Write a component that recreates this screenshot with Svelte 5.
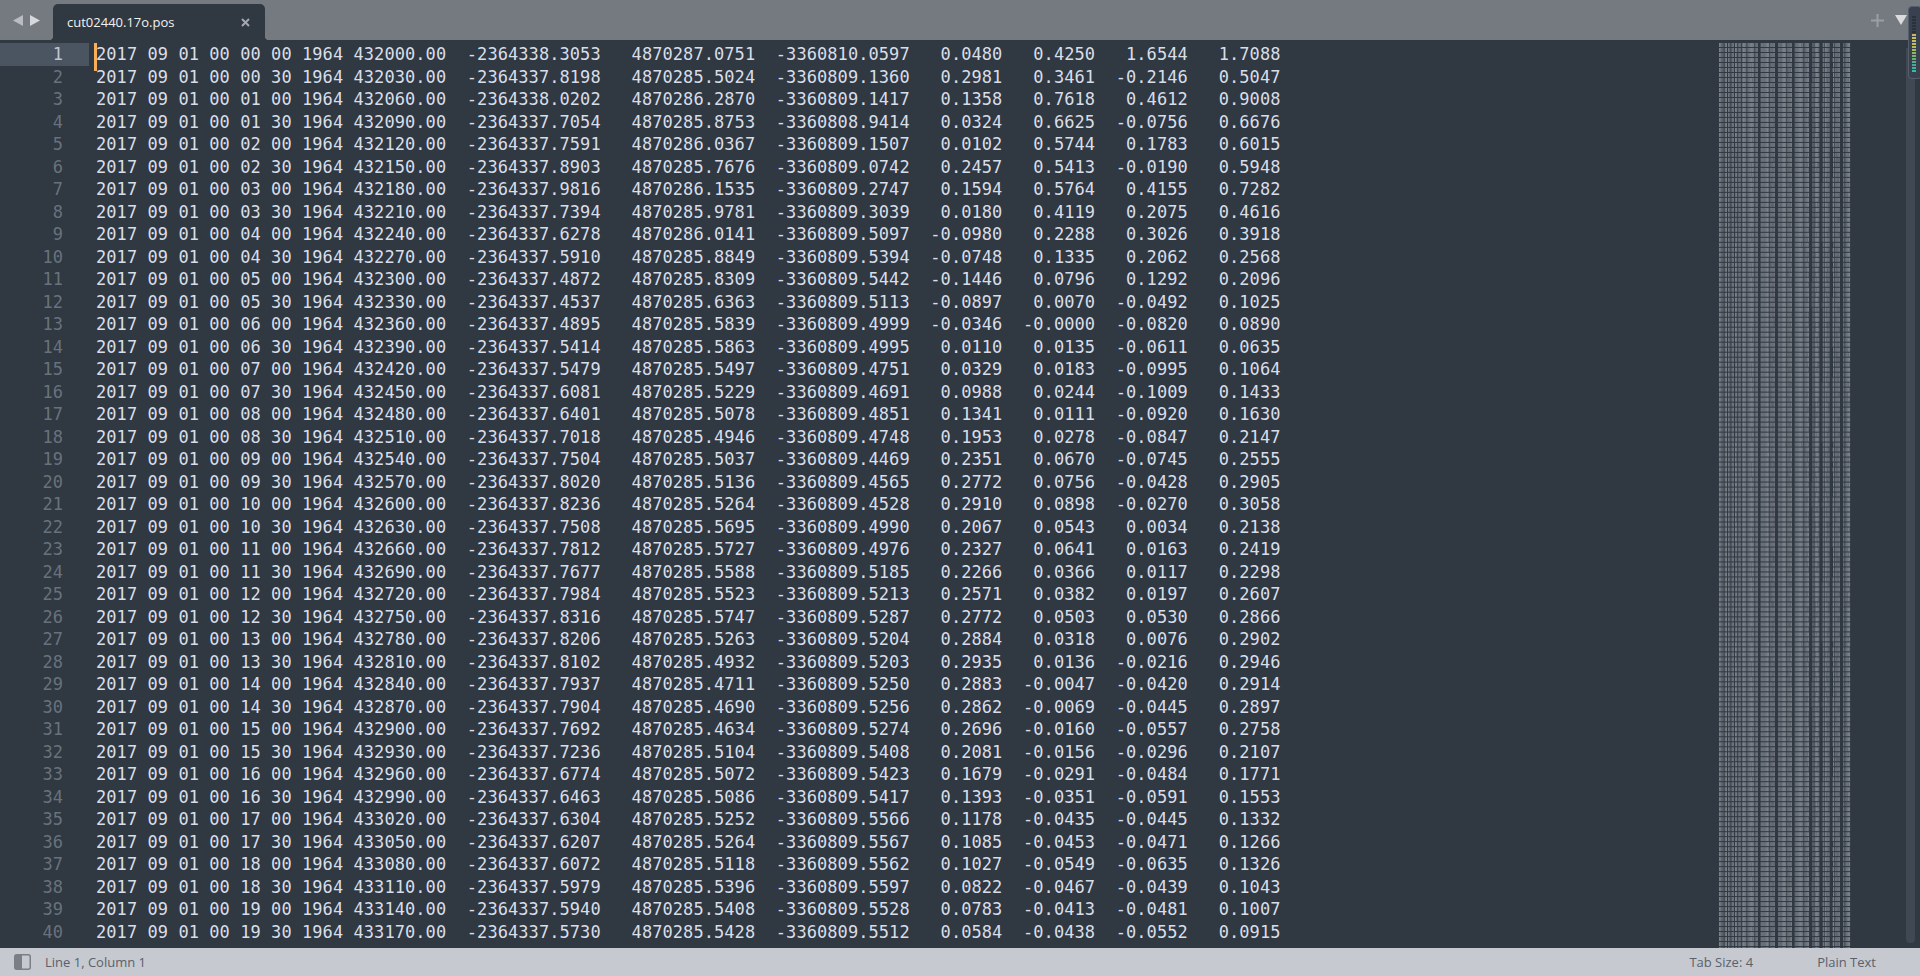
<script>
    import { onMount } from "svelte";

    const raw = `-2364338.3053 4870287.0751 -3360810.0597 0.0480 0.4250 1.6544 1.7088
-2364337.8198 4870285.5024 -3360809.1360 0.2981 0.3461 -0.2146 0.5047
-2364338.0202 4870286.2870 -3360809.1417 0.1358 0.7618 0.4612 0.9008
-2364337.7054 4870285.8753 -3360808.9414 0.0324 0.6625 -0.0756 0.6676
-2364337.7591 4870286.0367 -3360809.1507 0.0102 0.5744 0.1783 0.6015
-2364337.8903 4870285.7676 -3360809.0742 0.2457 0.5413 -0.0190 0.5948
-2364337.9816 4870286.1535 -3360809.2747 0.1594 0.5764 0.4155 0.7282
-2364337.7394 4870285.9781 -3360809.3039 0.0180 0.4119 0.2075 0.4616
-2364337.6278 4870286.0141 -3360809.5097 -0.0980 0.2288 0.3026 0.3918
-2364337.5910 4870285.8849 -3360809.5394 -0.0748 0.1335 0.2062 0.2568
-2364337.4872 4870285.8309 -3360809.5442 -0.1446 0.0796 0.1292 0.2096
-2364337.4537 4870285.6363 -3360809.5113 -0.0897 0.0070 -0.0492 0.1025
-2364337.4895 4870285.5839 -3360809.4999 -0.0346 -0.0000 -0.0820 0.0890
-2364337.5414 4870285.5863 -3360809.4995 0.0110 0.0135 -0.0611 0.0635
-2364337.5479 4870285.5497 -3360809.4751 0.0329 0.0183 -0.0995 0.1064
-2364337.6081 4870285.5229 -3360809.4691 0.0988 0.0244 -0.1009 0.1433
-2364337.6401 4870285.5078 -3360809.4851 0.1341 0.0111 -0.0920 0.1630
-2364337.7018 4870285.4946 -3360809.4748 0.1953 0.0278 -0.0847 0.2147
-2364337.7504 4870285.5037 -3360809.4469 0.2351 0.0670 -0.0745 0.2555
-2364337.8020 4870285.5136 -3360809.4565 0.2772 0.0756 -0.0428 0.2905
-2364337.8236 4870285.5264 -3360809.4528 0.2910 0.0898 -0.0270 0.3058
-2364337.7508 4870285.5695 -3360809.4990 0.2067 0.0543 0.0034 0.2138
-2364337.7812 4870285.5727 -3360809.4976 0.2327 0.0641 0.0163 0.2419
-2364337.7677 4870285.5588 -3360809.5185 0.2266 0.0366 0.0117 0.2298
-2364337.7984 4870285.5523 -3360809.5213 0.2571 0.0382 0.0197 0.2607
-2364337.8316 4870285.5747 -3360809.5287 0.2772 0.0503 0.0530 0.2866
-2364337.8206 4870285.5263 -3360809.5204 0.2884 0.0318 0.0076 0.2902
-2364337.8102 4870285.4932 -3360809.5203 0.2935 0.0136 -0.0216 0.2946
-2364337.7937 4870285.4711 -3360809.5250 0.2883 -0.0047 -0.0420 0.2914
-2364337.7904 4870285.4690 -3360809.5256 0.2862 -0.0069 -0.0445 0.2897
-2364337.7692 4870285.4634 -3360809.5274 0.2696 -0.0160 -0.0557 0.2758
-2364337.7236 4870285.5104 -3360809.5408 0.2081 -0.0156 -0.0296 0.2107
-2364337.6774 4870285.5072 -3360809.5423 0.1679 -0.0291 -0.0484 0.1771
-2364337.6463 4870285.5086 -3360809.5417 0.1393 -0.0351 -0.0591 0.1553
-2364337.6304 4870285.5252 -3360809.5566 0.1178 -0.0435 -0.0445 0.1332
-2364337.6207 4870285.5264 -3360809.5567 0.1085 -0.0453 -0.0471 0.1266
-2364337.6072 4870285.5118 -3360809.5562 0.1027 -0.0549 -0.0635 0.1326
-2364337.5979 4870285.5396 -3360809.5597 0.0822 -0.0467 -0.0439 0.1043
-2364337.5940 4870285.5408 -3360809.5528 0.0783 -0.0413 -0.0481 0.1007
-2364337.5730 4870285.5428 -3360809.5512 0.0584 -0.0438 -0.0552 0.0915`.split("\n");

    const pad2 = (n) => String(n).padStart(2, "0");

    const rows = raw.map((line, i) => {
        const v = line.split(" ");
        const mm = pad2(Math.floor(i / 2));
        const ss = i % 2 ? "30" : "00";
        return (
            `2017 09 01 00 ${mm} ${ss} 1964 ${432000 + i * 30}.00` +
            v[0].padStart(15) + v[1].padStart(15) + v[2].padStart(15) +
            v[3].padStart(9) + v[4].padStart(9) + v[5].padStart(9) + v[6].padStart(9)
        );
    });

    // level meter on the scrollbar knob, top to bottom
    const meter = [
        "#2b313c", "#2b313c", "#2b313c", "#2b313c", "#2b313c", "#2b313c",
        "#c9b85c", "#c9bc5e", "#c4be5c", "#bcbf5c", "#aebd5c", "#a0ba5e", "#8fb664",
        "#7cb26c", "#68ae78", "#55ab86", "#47aa94", "#3fb0a0", "#3ab8a8",
    ];

    let map;

    onMount(() => {
        const ctx = map.getContext("2d");
        for (let l = 0; l < 182; l++) {
            const row = rows[l % rows.length];
            for (let c = 0; c < row.length; c++) {
                const ch = row[c];
                if (ch === " ") continue;
                // thin glyphs read dimmer once shrunk
                ctx.fillStyle = ch === "." || ch === "-" ? "#4a515b" : ch === "1" || ch === "7" ? "#6a7079" : "#7a8089";
                ctx.fillRect(c * 1.14, l * 5, 1.14, 4);
            }
        }
    });
</script>

<div class="window">
    <header class="tabs">
        <nav class="arrows">
            <svg width="10" height="11" viewBox="0 0 10 11"><path d="M10 0v11L0 5.5z" fill="#b9bcc1" /></svg>
            <svg width="10" height="11" viewBox="0 0 10 11"><path d="M0 0v11l10-5.500z" fill="#d6d8db" /></svg>
        </nav>
        <div class="tab">
            <span>cut02440.17o.pos</span>
            <svg width="9" height="9" viewBox="0 0 9 9"><path d="M1 1l7 7M8 1L1 8" stroke="#a4a8ae" stroke-width="2" /></svg>
        </div>
        <div class="tab-actions">
            <svg width="13" height="13" viewBox="0 0 13 13"><path d="M6.500 0v13M0 6.500h13" stroke="#9a9ea5" stroke-width="2" /></svg>
            <svg width="12" height="10" viewBox="0 0 12 10"><path d="M0 0h12L6 10z" fill="#d9dbde" /></svg>
        </div>
    </header>

    <main class="editor">
        <div class="lines">
            {#each rows as row, i}
                <div class="line" class:current={i === 0}>
                    <span class="num">{i + 1}</span><span class="text">{row}</span>
                </div>
            {/each}
            <i class="caret"></i>
        </div>
        <canvas bind:this={map} width="140" height="906"></canvas>
        <div class="scrollbar"></div>
        <div class="knob">
            {#each meter as color}
                <b style="background: {color}"></b>
            {/each}
        </div>
    </main>

    <footer class="status">
        <svg width="17" height="16" viewBox="0 0 17 16">
            <rect x="0.750" y="0.750" width="15.500" height="14.500" rx="2" fill="none" stroke="#7b7e84" stroke-width="1.500" />
            <rect x="1" y="1" width="7" height="14" fill="#7b7e84" />
        </svg>
        <span class="pos">Line 1, Column 1</span>
        <span class="tabsize">Tab Size: 4</span>
        <span class="syntax">Plain Text</span>
    </footer>
</div>

<style>
    :global(body) {
        background: #303841;
    }

    .window {
        height: 976px;
        display: flex;
        flex-direction: column;
        overflow: hidden;
    }

    /* ---- Tab strip ---- */
    .tabs {
        height: 40px;
        flex: none;
        background: #757980;
        display: flex;
        align-items: flex-end;
    }

    .arrows {
        width: 53px;
        height: 40px;
        box-sizing: border-box;
        display: flex;
        gap: 7px;
        padding: 15px 0 0 13px;
    }

    .arrows svg {
        display: block;
    }

    .tab {
        position: relative;
        width: 212px;
        height: 36px;
        box-sizing: border-box;
        padding: 0 15px 0 14px;
        background: #303841;
        color: #f0f1f2;
        font: 13px/36px "Open Sans", sans-serif;
        border-radius: 5px 5px 0 0;
        display: flex;
        align-items: center;
        justify-content: space-between;
    }

    .tab::before,
    .tab::after {
        content: "";
        position: absolute;
        bottom: 0;
        width: 4px;
        height: 4px;
    }

    .tab::before {
        left: -4px;
        background: radial-gradient(circle at 0 0, transparent 4px, #303841 4.500px);
    }

    .tab::after {
        right: -4px;
        background: radial-gradient(circle at 100% 0, transparent 4px, #303841 4.500px);
    }

    .tab-actions {
        margin-left: auto;
        height: 40px;
        box-sizing: border-box;
        padding: 14px 13px 0 0;
        display: flex;
        gap: 11px;
    }

    .tab-actions svg:last-child {
        margin-top: 1px;
    }

    /* ---- Editor ---- */
    .editor {
        flex: 1;
        position: relative;
        display: flex;
        padding-top: 3px;
        min-height: 0;
    }

    .lines {
        position: relative;
        width: 1719px;
        flex: none;
    }

    .line {
        display: flex;
        height: 22.500px;
        font: 17px/22.500px "DejaVu Sans Mono", monospace;
        color: #d8dee9;
        white-space: pre;
    }

    .num {
        width: 63px;
        padding-right: 26px;
        margin-right: 7px;
        text-align: right;
        color: #68727c;
        flex: none;
    }

    .current .num {
        background: #4a5561;
        color: #c0c5ce;
    }

    .text {
        letter-spacing: 0.065px;
    }

    .caret {
        position: absolute;
        left: 94px;
        top: 0;
        width: 3px;
        height: 28px;
        background: #f9ae58;
    }

    canvas {
        display: block;
        flex: none;
    }

    .scrollbar {
        position: absolute;
        left: 1906px;
        top: 8px;
        width: 9px;
        height: 895px;
        background: #3f4853;
        border-radius: 0 0 4px 4px;
    }

    .knob {
        position: absolute;
        left: 1908px;
        top: -34px;
        width: 14px;
        height: 73px;
        box-sizing: border-box;
        padding: 9px 5px 0 3px;
        background: #3a414e;
        border: 1px solid #565d6b;
        border-radius: 4px;
        display: flex;
        flex-direction: column;
        gap: 1px;
    }

    .knob b {
        display: block;
        height: 2px;
        flex: none;
    }

    /* ---- Status bar ---- */
    .status {
        height: 28px;
        flex: none;
        background: #c6c9d0;
        color: #5a616b;
        font: 13px/26px "Open Sans", sans-serif;
        display: flex;
        align-items: center;
        padding: 0 44px 0 14px;
    }

    .pos {
        margin-left: 14px;
    }

    .tabsize {
        margin-left: auto;
    }

    .syntax {
        margin-left: 64px;
    }
</style>
